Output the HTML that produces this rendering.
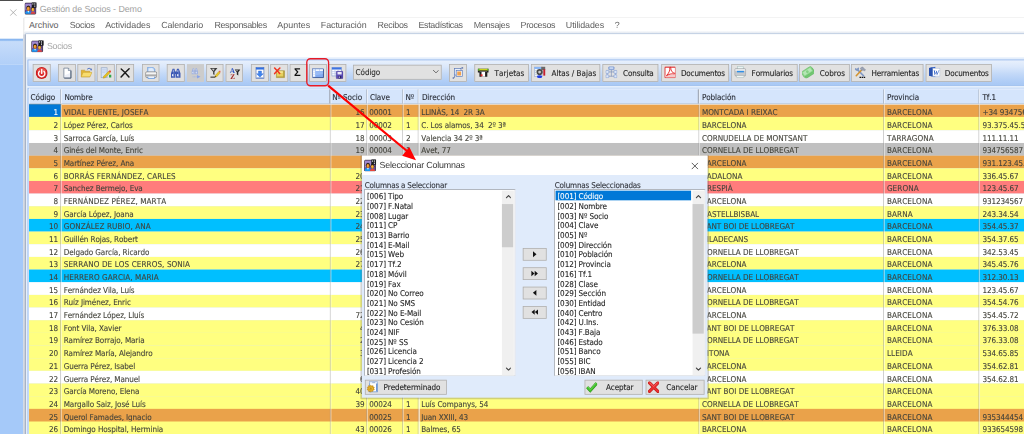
<!DOCTYPE html>
<html lang="es"><head><meta charset="utf-8"><title>Gestión de Socios - Demo</title>
<style>
html,body{margin:0;padding:0;background:#fff;overflow:hidden}
body{width:1024px;height:434px;position:relative}
#w{position:absolute;left:0;top:0;width:1375px;height:583px;transform:scale(0.7447);transform-origin:0 0;background:#fff}
#w div,#w span,#w svg{position:absolute;box-sizing:border-box}
#w span{line-height:1;white-space:pre;text-rendering:geometricPrecision}
#w text{text-rendering:geometricPrecision}
.t{font-family:"DejaVu Sans Condensed","DejaVu Sans","Liberation Sans",sans-serif;font-stretch:condensed;letter-spacing:-0.012em;font-kerning:none;font-variant-ligatures:none;-webkit-text-stroke:.12px}
.s{font-family:"Liberation Sans","DejaVu Sans",sans-serif;letter-spacing:-0.015em}
.sb{font-family:"Liberation Sans","DejaVu Sans",sans-serif;font-weight:bold}
.btn{background:#e1e1e1;border:1.3px solid #adadad}
</style></head><body><div id="w">
<div style="left:0px;top:0px;width:31.02px;height:52.03px;background:#fff"></div>
<div style="left:0px;top:52.03px;width:31.02px;height:4.36px;background:linear-gradient(#7fb0ee,#a9cbf6)"></div>
<div style="left:0px;top:56.4px;width:31.02px;height:30.88px;background:linear-gradient(#c6dcfa,#b1cff8)"></div>
<div style="left:0px;top:87.28px;width:31.02px;height:496.17px;background:#a5c9f9"></div>
<div style="left:0px;top:0px;width:30.88px;height:1.07px;background:#111"></div>
<svg style="left:13.43px;top:12.09px" width="9.67" height="9.67" viewBox="0 0 16 16"><path d="M1 1L15 15M15 1L1 15" stroke="#9a9a9a" stroke-width="1.6" fill="none"/></svg>
<div style="left:31.02px;top:23.5px;width:3.36px;height:22.16px;background:linear-gradient(90deg,#e6e6e6,#fff)"></div>
<div style="left:31.02px;top:45.66px;width:3.22px;height:537.8px;background:linear-gradient(90deg,#d6dbe4,#c3cad6)"></div>
<div style="left:33.97px;top:45.66px;width:1.21px;height:537.8px;background:#8898b2"></div>
<svg style="left:32.63px;top:2.89px" width="16.65" height="16.65" viewBox="0 0 16 16"><rect x=".4" y="1.1" width="14.2" height="14.2" rx="1.3" fill="#6d4fa6" stroke="#2a2233" stroke-width="1"/><path d="M1 1.8h9v6L1 10.5z" fill="#a48fd4" opacity=".9"/><ellipse cx="4.9" cy="7.6" rx="2.7" ry="3.3" fill="#2e2018"/><ellipse cx="4.9" cy="8.6" rx="1.9" ry="2.7" fill="#e58a22"/><ellipse cx="4.5" cy="8" rx=".9" ry="1.4" fill="#f6b048" opacity=".8"/><path d="M.9 15V13Q1.8 11 4.9 11.2Q8 11 8.3 13.2V15z" fill="#1b96f0"/><path d="M3.8 11.3L4.9 13.6L6 11.3z" fill="#e6f3ff"/><ellipse cx="10.7" cy="8.8" rx="2.4" ry="3" fill="#3a2818"/><ellipse cx="10.7" cy="9.6" rx="1.8" ry="2.4" fill="#eaa02c"/><ellipse cx="10.3" cy="9" rx=".8" ry="1.2" fill="#f8c458" opacity=".8"/><path d="M7.6 15V14.2Q8.6 12.4 10.7 12.5Q13.4 12.4 14 14.4V15z" fill="#e8463a"/><rect x="9.2" y="0" width="6.8" height="7" rx=".7" fill="#1b1b20"/><path d="M10.7 1.4v1.7M13.2 1.4v1.7M13.2 4.2v1.7" stroke="#f2f2f2" stroke-width="1.2"/></svg>
<span class="s" style="top:7.07px;font-size:11.95px;color:#a2a2a2;left:53.38px;letter-spacing:-0.0079em;">Gestión de Socios - Demo</span>
<div style="left:31.56px;top:23.1px;width:1344.17px;height:1.07px;background:#efefef"></div>
<span class="s" style="top:28.07px;font-size:11.95px;color:#5e5e5e;left:38.81px;letter-spacing:0.0004em;">Archivo</span>
<span class="s" style="top:28.07px;font-size:11.95px;color:#5e5e5e;left:93.59px;letter-spacing:-0.0321em;">Socios</span>
<span class="s" style="top:28.07px;font-size:11.95px;color:#5e5e5e;left:141.26px;letter-spacing:-0.0022em;">Actividades</span>
<span class="s" style="top:28.07px;font-size:11.95px;color:#5e5e5e;left:216.53px;letter-spacing:-0.0134em;">Calendario</span>
<span class="s" style="top:28.07px;font-size:11.95px;color:#5e5e5e;left:287.9px;letter-spacing:-0.0366em;">Responsables</span>
<span class="s" style="top:28.07px;font-size:11.95px;color:#5e5e5e;left:372.36px;letter-spacing:0.0039em;">Apuntes</span>
<span class="s" style="top:28.07px;font-size:11.95px;color:#5e5e5e;left:430.78px;letter-spacing:-0.0072em;">Facturación</span>
<span class="s" style="top:28.07px;font-size:11.95px;color:#5e5e5e;left:506.92px;letter-spacing:-0.0298em;">Recibos</span>
<span class="s" style="top:28.07px;font-size:11.95px;color:#5e5e5e;left:561.84px;letter-spacing:-0.0335em;">Estadísticas</span>
<span class="s" style="top:28.07px;font-size:11.95px;color:#5e5e5e;left:636.16px;letter-spacing:-0.0301em;">Mensajes</span>
<span class="s" style="top:28.07px;font-size:11.95px;color:#5e5e5e;left:699.07px;letter-spacing:-0.0351em;">Procesos</span>
<span class="s" style="top:28.07px;font-size:11.95px;color:#5e5e5e;left:759.77px;letter-spacing:-0.0088em;">Utilidades</span>
<span class="s" style="top:28.07px;font-size:11.95px;color:#5e5e5e;left:825.43px;">?</span>
<div style="left:31.56px;top:40.96px;width:1344.17px;height:3.89px;background:linear-gradient(#fff,#dfe5ee)"></div>
<div style="left:34.38px;top:44.58px;width:1341.35px;height:1.88px;background:#9db4d4"></div>
<div style="left:34.64px;top:46.46px;width:1341.08px;height:31.29px;background:#fff"></div>
<svg style="left:41.9px;top:53.58px" width="16.65" height="16.65" viewBox="0 0 16 16"><rect x=".4" y="1.1" width="14.2" height="14.2" rx="1.3" fill="#6d4fa6" stroke="#2a2233" stroke-width="1"/><path d="M1 1.8h9v6L1 10.5z" fill="#a48fd4" opacity=".9"/><ellipse cx="4.9" cy="7.6" rx="2.7" ry="3.3" fill="#2e2018"/><ellipse cx="4.9" cy="8.6" rx="1.9" ry="2.7" fill="#e58a22"/><ellipse cx="4.5" cy="8" rx=".9" ry="1.4" fill="#f6b048" opacity=".8"/><path d="M.9 15V13Q1.8 11 4.9 11.2Q8 11 8.3 13.2V15z" fill="#1b96f0"/><path d="M3.8 11.3L4.9 13.6L6 11.3z" fill="#e6f3ff"/><ellipse cx="10.7" cy="8.8" rx="2.4" ry="3" fill="#3a2818"/><ellipse cx="10.7" cy="9.6" rx="1.8" ry="2.4" fill="#eaa02c"/><ellipse cx="10.3" cy="9" rx=".8" ry="1.2" fill="#f8c458" opacity=".8"/><path d="M7.6 15V14.2Q8.6 12.4 10.7 12.5Q13.4 12.4 14 14.4V15z" fill="#e8463a"/><rect x="9.2" y="0" width="6.8" height="7" rx=".7" fill="#1b1b20"/><path d="M10.7 1.4v1.7M13.2 1.4v1.7M13.2 4.2v1.7" stroke="#f2f2f2" stroke-width="1.2"/></svg>
<span class="s" style="top:57.07px;font-size:11.95px;color:#a8a8a8;left:62.98px;letter-spacing:-0.0321em;">Socios</span>
<div style="left:34.64px;top:77.21px;width:1341.08px;height:506.24px;background:#e4eefc"></div>
<div style="left:37.26px;top:80.23px;width:1340.47px;height:34.51px;background:linear-gradient(#e8f0fc,#dbe8fb 25%,#c3d9f8 55%,#b0cdf6 85%,#a8c8f5);border:1.2px solid #83ace8;box-shadow:inset 0 1px 0 0 rgba(255,255,255,.45)"></div>
<div style="left:37.26px;top:117.5px;width:1340.47px;height:467.97px;background:#d5e5fc;border:1.25px solid #9bbdee"></div>
<div class="btn" style="left:44.31px;top:86.07px;width:23.77px;height:23.77px;"></div>
<svg style="left:48.21px;top:89.57px" width="15.98" height="15.98" viewBox="0 0 16 16"><circle cx="8" cy="8" r="8" fill="#c41818"/><circle cx="8" cy="8" r="6.9" fill="#dc2a2a"/><ellipse cx="8" cy="5" rx="5.6" ry="3.6" fill="#f2685c" opacity=".55"/><path d="M5 5.6A4.3 4.3 0 1 0 11 5.6" fill="none" stroke="#fff" stroke-width="1.9" stroke-linecap="round" opacity=".95"/><path d="M8 3.4V8.6" stroke="#fff" stroke-width="1.9" stroke-linecap="round" opacity=".95"/></svg>
<div class="btn" style="left:78.29px;top:86.07px;width:23.77px;height:23.77px;"></div>
<svg style="left:82.18px;top:89.57px" width="15.98" height="15.98" viewBox="0 0 16 16"><path d="M3.8 1.5H9.8L13 4.7V14.6H3.8z" fill="#fff" stroke="#5d6d86" stroke-width=".9"/><path d="M9.8 1.5V4.7H13" fill="#dfe6f2" stroke="#5d6d86" stroke-width=".8"/><path d="M13.4 5V15H4.4" fill="none" stroke="#44546e" stroke-width="1.1"/><path d="M5 11L12 8V13.8H5z" fill="#dfe4f2" opacity=".6"/></svg>
<div class="btn" style="left:104.34px;top:86.07px;width:23.77px;height:23.77px;"></div>
<svg style="left:108.23px;top:89.57px" width="15.98" height="15.98" viewBox="0 0 16 16"><path d="M1 4.2H5.6L7 5.6H12.6V13.2H1z" fill="#e2b434" stroke="#b98d1c" stroke-width=".6"/><path d="M1 13.2L3.6 7.2H15.6L12.8 13.2z" fill="#f8dc6e" stroke="#c39a22" stroke-width=".6"/><path d="M9 3Q11.6 .2 14.2 2.8" fill="none" stroke="#3f67c0" stroke-width="1.1"/><path d="M12.8 3.9L15.4 1.6L15.2 4.6z" fill="#3f67c0"/></svg>
<div class="btn" style="left:130.32px;top:86.07px;width:23.77px;height:23.77px;"></div>
<svg style="left:134.22px;top:89.57px" width="15.98" height="15.98" viewBox="0 0 16 16"><rect x="1.8" y="1" width="8" height="13.4" fill="#d5e2f5" stroke="#8ba0c2" stroke-width=".8"/><path d="M3.2 3.5h5M3.2 5.5h5M3.2 7.5h4" stroke="#b5c6e2" stroke-width=".7"/><path d="M5.2 12.4L11.8 5.8L13.8 7.8L7.2 14.4L4.6 15z" fill="#e6c11e" stroke="#a8861a" stroke-width=".5"/><path d="M11.8 5.8L13 4.6Q14 4 14.8 5Q15.6 5.8 15 6.6L13.8 7.8z" fill="#e2503e"/><path d="M12.4 10.5H15.6V14H12.4z" fill="#2fa447"/></svg>
<div class="btn" style="left:156.44px;top:86.07px;width:23.77px;height:23.77px;"></div>
<svg style="left:160.33px;top:89.57px" width="15.98" height="15.98" viewBox="0 0 16 16"><path d="M2.8 2.6Q8 7 13.2 13.4M13.4 2.4Q8 7.5 2.6 13.4" fill="none" stroke="#1a1a1a" stroke-width="2" stroke-linecap="round"/></svg>
<div class="btn" style="left:190.68px;top:86.07px;width:23.77px;height:23.77px;"></div>
<svg style="left:194.57px;top:89.57px" width="15.98" height="15.98" viewBox="0 0 16 16"><path d="M3.4 .2H10.2L12.8 2.8V7.6H3.4z" fill="#c6dcf8" stroke="#5a92dc" stroke-width="1"/><path d="M4.6 2.2L9 1.4L11.6 4.6V6H4.6z" fill="#e6f0fc" opacity=".8"/><rect x=".5" y="6.5" width="15" height="7.6" rx="1.7" fill="#d4d4d4" stroke="#7a7a7a" stroke-width=".9"/><rect x="1.3" y="7.3" width="13.4" height="2.2" rx=".9" fill="#f4f4f4"/><rect x="1" y="10.4" width="14" height="1.5" fill="#a4a4a4"/><path d="M3.6 13V15.4H12.6V13" fill="#eaf2fd" stroke="#5a92dc" stroke-width="1"/></svg>
<div class="btn" style="left:224.45px;top:86.07px;width:23.77px;height:23.77px;"></div>
<svg style="left:228.35px;top:89.57px" width="15.98" height="15.98" viewBox="0 0 16 16"><path d="M1.6 14.4V8.4L3.8 2.4H6.4L7.6 8.4V14.4zM8.4 14.4V8.4L9.6 2.4H12.2L14.4 8.4V14.4z" fill="#3a58b4"/><rect x="6.8" y="6" width="2.4" height="3.4" fill="#3a58b4"/><rect x="3" y="9.6" width="1.8" height="2.8" fill="#e6eeff"/><rect x="9.8" y="9.6" width="1.8" height="2.8" fill="#e6eeff"/><rect x="4" y="4.4" width="1.2" height="2" fill="#e6eeff" opacity=".7"/><rect x="10" y="4.4" width="1.2" height="2" fill="#e6eeff" opacity=".7"/><path d="M5.4 3V14M12 3.4V14" stroke="#fff" stroke-width="1.1" opacity=".28"/></svg>
<div style="left:250.7px;top:86.07px;width:23.5px;height:23.77px;background:#cccccc"></div>
<svg style="left:254.46px;top:89.57px" width="15.98" height="15.98" viewBox="0 0 16 16"><g transform="translate(2.4 .2) scale(.66)"><path d="M1.6 14.4V8.4L3.8 2.4H6.4L7.6 8.4V14.4zM8.4 14.4V8.4L9.6 2.4H12.2L14.4 8.4V14.4z" fill="#9db0de"/><rect x="6.8" y="6" width="2.4" height="3.4" fill="#9db0de"/><rect x="3" y="9.6" width="1.8" height="2.8" fill="#e8eefc"/><rect x="9.8" y="9.6" width="1.8" height="2.8" fill="#e8eefc"/><rect x="4" y="4.4" width="1.2" height="2" fill="#e8eefc" opacity=".7"/><rect x="10" y="4.4" width="1.2" height="2" fill="#e8eefc" opacity=".7"/><path d="M5.4 3V14M12 3.4V14" stroke="#fff" stroke-width="1.1" opacity=".28"/></g><path d="M4.6 13.2H11" stroke="#9ab0e6" stroke-width="1.1" stroke-dasharray="1.4 .7"/><path d="M10.6 10.8L15.2 13.2L10.6 15.6z" fill="#86a2ea"/></svg>
<div class="btn" style="left:276.62px;top:86.07px;width:23.77px;height:23.77px;"></div>
<svg style="left:280.52px;top:89.57px" width="15.98" height="15.98" viewBox="0 0 16 16"><path d="M1 1.4H11L7 6.4V10.8L5.2 9.8V6.4z" fill="#3c3c3c"/><path d="M3.2 2.2H7.2L6 5.2z" fill="#e4e4e4" opacity=".85"/><path d="M1.6 13.6H8" stroke="#1c1c1c" stroke-width="1.3"/><path d="M7.4 13.8L8.2 11.2L12.8 6L14.8 7.8L10.2 13z" fill="#e8c62a" stroke="#a88a1c" stroke-width=".5"/><path d="M12.8 6L13.8 4.9Q14.8 4.4 15.5 5.2Q16.2 6 15.7 6.8L14.8 7.8z" fill="#e65a48"/><path d="M7.4 13.8L8 12L9.2 13.2z" fill="#222"/></svg>
<div class="btn" style="left:302.67px;top:86.07px;width:23.77px;height:23.77px;"></div>
<svg style="left:306.57px;top:89.57px" width="15.98" height="15.98" viewBox="0 0 16 16"><text x="1.6" y="8" font-family="Liberation Serif,serif" font-weight="bold" font-size="9.8" fill="#2d55c4">A</text><text x="2.2" y="15.6" font-family="Liberation Serif,serif" font-weight="bold" font-size="9.8" fill="#a12d2d">Z</text><path d="M8.2 3.4H15.8L13 7.2V11.4L11 10.2V7.2z" fill="#262626"/><path d="M9.8 4H12.4L11.6 6z" fill="#ddd" opacity=".8"/></svg>
<div class="btn" style="left:336.91px;top:86.07px;width:23.77px;height:23.77px;"></div>
<svg style="left:340.81px;top:89.57px" width="15.98" height="15.98" viewBox="0 0 16 16"><rect x="2.8" y=".8" width="10.6" height="14.6" fill="#fff" stroke="#5472b4" stroke-width=".9"/><rect x="2.8" y=".8" width="10.6" height="2.6" fill="#2f6fe2"/><path d="M6 5.4H10.2V9H12.6L8.1 13.8L3.6 9H6z" fill="#3f84ee" stroke="#2c63c8" stroke-width=".5"/><rect x="3.2" y="14" width="9.8" height="1.2" fill="#6f8fd0"/></svg>
<div class="btn" style="left:362.96px;top:86.07px;width:23.77px;height:23.77px;"></div>
<svg style="left:366.86px;top:89.57px" width="15.98" height="15.98" viewBox="0 0 16 16"><path d="M4.2 5H15V14.2H4.2z" fill="#e7d05c" stroke="#9c8630" stroke-width=".8"/><path d="M4.6 12.6H14.6V13.8H4.6zM13.4 5.4H14.6V13.8H13.4z" fill="#b09a3c"/><path d="M5 5.6H12.8V8H5z" fill="#f4e48e"/><path d="M1.8 1.4L8.6 8.6M8.8 1.4L1.8 8.8" stroke="#f03420" stroke-width="2.1" stroke-linecap="round"/></svg>
<div class="btn" style="left:388.95px;top:86.07px;width:23.77px;height:23.77px;"></div>
<span class="sb" style="top:90.03px;font-size:15.04px;color:#111;left:394.86px;">Σ</span>
<div class="btn" style="left:414.93px;top:86.07px;width:23.77px;height:23.77px;"></div>
<svg style="left:418.83px;top:89.57px" width="15.98" height="15.98" viewBox="0 0 16 16"><rect x=".8" y="2.4" width="14.6" height="11.8" fill="#9abcf4" stroke="#4a6ab0" stroke-width=".8"/><path d="M4.6 6H15V13.8H4.6z" fill="#82aaf0"/><path d="M4.6 6H15V9.5L4.6 11z" fill="#9dbef6" opacity=".8"/><rect x="1.2" y="2.8" width="3" height="11" fill="#d5e3fa"/><rect x="5" y="3.2" width="4.4" height="2" fill="#fff"/><rect x="10" y="3.2" width="4.8" height="2" fill="#fff"/><path d="M1.4 6.4h2.6M1.4 9h2.6M1.4 11.6h2.6" stroke="#fff" stroke-width="1.3"/><path d="M15.4 3V14.2H1.4" fill="none" stroke="#2d4684" stroke-width=".9"/></svg>
<div class="btn" style="left:440.85px;top:86.07px;width:23.77px;height:23.77px;"></div>
<svg style="left:444.74px;top:89.57px" width="15.98" height="15.98" viewBox="0 0 16 16"><rect x=".6" y=".6" width="12.8" height="11.4" fill="#fff" stroke="#6f8dcb" stroke-width=".8"/><rect x=".6" y=".6" width="12.8" height="2.8" fill="#3d73e2"/><path d="M.6 6.2h12.8M.6 9h12.8M4.8 3.4v8.6M9 3.4v8.6" stroke="#a9bde6" stroke-width=".8"/><rect x="6.6" y="5.8" width="9" height="9.8" rx=".8" fill="#5b4cb6" stroke="#3d3290" stroke-width=".6"/><rect x="8.2" y="6.6" width="5.6" height="3.4" fill="#eceaf8"/><rect x="9.4" y="12" width="4" height="3.4" fill="#2c2660"/><rect x="10" y="12.6" width="1.2" height="2.2" fill="#cfcbee"/></svg>
<div class="btn" style="left:602.93px;top:86.07px;width:23.77px;height:23.77px;"></div>
<svg style="left:606.82px;top:89.57px" width="15.98" height="15.98" viewBox="0 0 16 16"><rect x="3.4" y="2.2" width="8.6" height="8.6" fill="#e9effa" stroke="#5a78b8" stroke-width=".9"/><rect x="5.6" y="4.6" width="8.2" height="8.2" fill="#f2f5fc" stroke="#5a78b8" stroke-width=".9"/><rect x="7" y="6" width="5.2" height="5.4" fill="#f2a24e"/><path d="M3.4 11.4V13.6Q3.4 14.8 2 14.8M12 2.2Q12 .8 13.6 1" fill="none" stroke="#4a66a8" stroke-width=".9"/><circle cx="1.6" cy="14.8" r=".9" fill="#3c58a0"/><circle cx="14.2" cy="1.2" r=".9" fill="#3c58a0"/></svg>
<div class="btn" style="left:473.88px;top:86.61px;width:119.11px;height:20.55px;"></div>
<span class="t" style="top:93.15px;font-size:10.81px;color:#2a2a2a;left:477.51px;">Código</span>
<svg style="left:580.5px;top:93.46px" width="8.86" height="5.91" viewBox="0 0 16 9"><path d="M1 1L8 8L15 1" stroke="#555" stroke-width="2" fill="none"/></svg>
<div class="btn" style="left:636.63px;top:86.07px;width:73.72px;height:23.77px;"></div>
<svg style="left:640.53px;top:89.3px" width="15.98" height="15.98" viewBox="0 0 16 16"><path d="M.6 3.2H15.6V8.4H13.4V14H2.8V8.4H.6z" fill="#1f1f1f"/><rect x="1" y="3.4" width="14.2" height="2.2" fill="#c9d31f"/><rect x="1" y="3.4" width="1.8" height="2.2" fill="#3fae3f"/><rect x="13.4" y="3.4" width="1.8" height="2.2" fill="#3fae3f"/><rect x="5.6" y="7.2" width="4.8" height="6.8" fill="#fff"/><rect x="4.4" y="10.8" width="2.6" height="2.6" fill="#e02a2a"/><rect x="3" y="6.4" width="10" height=".9" fill="#777"/></svg>
<span class="t" style="top:94.15px;font-size:10.81px;color:#1c1c1c;left:664.16px;letter-spacing:0.0069em;">Tarjetas</span>
<div class="btn" style="left:713.37px;top:86.07px;width:93.12px;height:23.77px;"></div>
<svg style="left:717.27px;top:89.3px" width="15.98" height="15.98" viewBox="0 0 16 16"><rect x=".6" y="1" width="10.4" height="12.4" fill="#f2f6fd" stroke="#8c9cc0" stroke-width=".7"/><rect x=".6" y="1" width="10.4" height="2.6" fill="#86b4f6"/><rect x="9.8" y=".6" width="5.4" height="4.4" fill="#6a6a6a"/><rect x="12.6" y="4" width="2.6" height="8.6" fill="#c5202e"/><circle cx="7.6" cy="7.8" r="4.2" fill="#4a4a4a"/><circle cx="7.6" cy="7.8" r="1.9" fill="#c9c9c9"/><path d="M1.6 6h2.4M1.6 8.4h2.4M1.6 10.8h2.4" stroke="#9aa" stroke-width=".8"/><ellipse cx="7.6" cy="14" rx="3.6" ry="2" fill="#2440e2"/></svg>
<span class="t" style="top:94.15px;font-size:10.81px;color:#1c1c1c;left:740.57px;letter-spacing:0.0006em;">Altas / Bajas</span>
<div class="btn" style="left:809.39px;top:86.07px;width:74.73px;height:23.77px;"></div>
<svg style="left:813.28px;top:89.3px" width="15.98" height="15.98" viewBox="0 0 16 16"><path d="M8 4.4V13.6M4.4 7.6H11.6M4.4 13.4H11.6M2.4 7.6V13.4M13.6 7.6V13.4" stroke="#7c90b8" stroke-width=".9" fill="none"/><rect x="4.4" y=".6" width="7.2" height="4" rx=".8" fill="#a6bde8" stroke="#6888c8" stroke-width=".8"/><rect x="5.8" y="1.8" width="4.4" height="1.2" fill="#e3ecfb"/><rect x="0.5" y="5.6" width="4" height="4" rx=".8" fill="#dce7f9" stroke="#7c98d2" stroke-width=".8"/><rect x="11.5" y="5.6" width="4" height="4" rx=".8" fill="#dce7f9" stroke="#7c98d2" stroke-width=".8"/><rect x="0.5" y="11.5" width="4" height="4" rx=".8" fill="#dce7f9" stroke="#7c98d2" stroke-width=".8"/><rect x="11.5" y="11.5" width="4" height="4" rx=".8" fill="#dce7f9" stroke="#7c98d2" stroke-width=".8"/></svg>
<span class="t" style="top:94.15px;font-size:10.81px;color:#1c1c1c;left:836.71px;letter-spacing:-0.0176em;">Consulta</span>
<div class="btn" style="left:887.61px;top:86.07px;width:91.85px;height:23.77px;"></div>
<svg style="left:891.5px;top:89.3px" width="15.98" height="15.98" viewBox="0 0 16 16"><rect x=".9" y="1.2" width="14.2" height="14.2" rx="1" fill="#fff" stroke="#df3636" stroke-width="1.5"/><path d="M1.6 11.4H14.4V14.6H1.6z" fill="#f6caca"/><path d="M3 12.6C6 9.4 8 5.4 7.4 2.4C7.2 .8 9 .8 8.8 2.6C8.6 6 11 8.8 14 9.4C15 9.8 14.4 10.6 13.4 10.4C9.6 9.6 5.8 10.8 3 12.6z" fill="none" stroke="#e11d1d" stroke-width="1.2"/></svg>
<span class="t" style="top:94.15px;font-size:10.81px;color:#1c1c1c;left:914.33px;letter-spacing:-0.0202em;">Documentos</span>
<div class="btn" style="left:982.27px;top:86.07px;width:88.63px;height:23.77px;"></div>
<svg style="left:986.17px;top:89.3px" width="15.98" height="15.98" viewBox="0 0 16 16"><rect x="4.4" y=".6" width="7.6" height="3.6" fill="#eaf4f4" stroke="#9fbcbc" stroke-width=".7"/><rect x=".6" y="3.2" width="14.8" height="9.8" rx="1.6" fill="#c6c9cd" stroke="#8e9296" stroke-width=".7"/><rect x="1.2" y="3.8" width="13.6" height="2.4" rx="1" fill="#e6e8ea"/><rect x="3.6" y="6.2" width="9.4" height="2" fill="#2f8fe6"/><rect x="3" y="12.4" width="10" height="2.8" rx=".8" fill="#f0f5f5" stroke="#a4b4b4" stroke-width=".7"/></svg>
<span class="t" style="top:94.15px;font-size:10.81px;color:#1c1c1c;left:1009.27px;letter-spacing:-0.0165em;">Formularios</span>
<div class="btn" style="left:1073.45px;top:86.07px;width:67.41px;height:23.77px;"></div>
<svg style="left:1077.35px;top:89.3px" width="15.98" height="15.98" viewBox="0 0 16 16"><g transform="rotate(-33 8 8)"><rect x="1" y="6.2" width="15" height="7.6" fill="#74c874" stroke="#58b058" stroke-width=".6"/><rect x="0" y="3" width="15.4" height="8" fill="#8ad68a" stroke="#62b862" stroke-width=".7"/><rect x="1.8" y="4.6" width="11.8" height="4.8" fill="#b4e6b4"/><ellipse cx="7.7" cy="7" rx="1.8" ry="2" fill="#84d084"/></g></svg>
<span class="t" style="top:94.15px;font-size:10.81px;color:#1c1c1c;left:1100.78px;letter-spacing:-0.0004em;">Cobros</span>
<div class="btn" style="left:1143.41px;top:86.07px;width:97.02px;height:23.77px;"></div>
<svg style="left:1147.31px;top:89.3px" width="15.98" height="15.98" viewBox="0 0 16 16"><path d="M4.4 4.6L12.6 12.8" stroke="#7f97c2" stroke-width="2.2" stroke-linecap="round"/><path d="M1.2 2.2A2.8 2.8 0 1 0 5.6 1.2L3.8 3.2z" fill="#7f97c2"/><path d="M2.8 12.8L10 5" stroke="#d39330" stroke-width="2.1" stroke-linecap="round"/><path d="M8.2 2.6L11.2 .8L15.4 5L13.4 6.2L11.8 4.8L10.2 6z" fill="#9aa3b5" stroke="#6e7890" stroke-width=".5"/><path d="M7.2 15H9.2M10 15H12M12.8 15H14.8" stroke="#111" stroke-width="1.7"/></svg>
<span class="t" style="top:94.15px;font-size:10.81px;color:#1c1c1c;left:1170.27px;letter-spacing:-0.0193em;">Herramientas</span>
<div class="btn" style="left:1243.45px;top:86.07px;width:88.09px;height:23.77px;"></div>
<svg style="left:1247.35px;top:89.3px" width="15.98" height="15.98" viewBox="0 0 16 16"><path d="M.6 2.2L9 .6V14.4L.6 12.8z" fill="#2f5fc6"/><rect x="5.2" y="2.6" width="10" height="10.6" fill="#fff" stroke="#a4b4d2" stroke-width=".7"/><path d="M.6 2.2L5.2 1.4V13.6L.6 12.8z" fill="#2a52b0"/><text x="6" y="11.2" font-family="Liberation Serif,serif" font-style="italic" font-weight="bold" font-size="9.4" fill="#2f5fc6">W</text><path d="M6 14.2L15 13.4V14.6L6 15.6z" fill="#cfd8ea"/></svg>
<span class="t" style="top:94.15px;font-size:10.81px;color:#1c1c1c;left:1268.63px;letter-spacing:-0.0214em;">Documentos</span>
<div style="left:38.87px;top:119.11px;width:1336.85px;height:21.35px;background:#d5e5fc;border-top:.9px solid #eef4fe;border-bottom:1.5px solid #b2bbc9"></div>
<span class="t" style="top:126.15px;font-size:10.81px;color:#262a33;left:41.09px;">Código</span>
<span class="t" style="top:126.15px;font-size:10.81px;color:#262a33;left:86.48px;">Nombre</span>
<span class="t" style="top:126.15px;font-size:10.81px;color:#262a33;left:446.22px;">Nº Socio</span>
<span class="t" style="top:126.15px;font-size:10.81px;color:#262a33;left:496.84px;">Clave</span>
<span class="t" style="top:126.15px;font-size:10.81px;color:#262a33;left:544.38px;">Nº</span>
<span class="t" style="top:126.15px;font-size:10.81px;color:#262a33;left:566.54px;">Dirección</span>
<span class="t" style="top:126.15px;font-size:10.81px;color:#262a33;left:942.53px;">Población</span>
<span class="t" style="top:126.15px;font-size:10.81px;color:#262a33;left:1190.95px;">Provincia</span>
<span class="t" style="top:126.15px;font-size:10.81px;color:#262a33;left:1319.32px;">Tf.1</span>
<div style="left:38.87px;top:140.46px;width:1336.85px;height:17.43px;background:#eaa24a"></div>
<div style="left:39.14px;top:140.46px;width:42.57px;height:17.03px;background:#0078d7"></div>
<span class="t" style="top:146.15px;font-size:10.81px;color:#fff;right:1296.98px;">1</span>
<span class="t" style="top:146.15px;font-size:10.81px;color:#42423a;left:85.54px;letter-spacing:0.0110em;">VIDAL FUENTE, JOSEFA</span>
<span class="t" style="top:146.15px;font-size:10.81px;color:#42423a;right:885.68px;">16</span>
<span class="t" style="top:146.15px;font-size:10.81px;color:#42423a;left:495.9px;">00001</span>
<span class="t" style="top:146.15px;font-size:10.81px;color:#42423a;left:545.19px;">1</span>
<span class="t" style="top:146.15px;font-size:10.81px;color:#42423a;left:565.6px;">LLINÀS, 14  2R 3A</span>
<span class="t" style="top:146.15px;font-size:10.81px;color:#42423a;left:942.53px;letter-spacing:0.0000em;">MONTCADA I REIXAC</span>
<span class="t" style="top:146.15px;font-size:10.81px;color:#42423a;left:1190.95px;letter-spacing:0.0130em;">BARCELONA</span>
<span class="t" style="top:146.15px;font-size:10.81px;color:#42423a;left:1319.32px;">+34 934756587</span>
<div style="left:38.87px;top:157.49px;width:1336.85px;height:17.43px;background:#ffff80"></div>
<span class="t" style="top:164.15px;font-size:10.81px;color:#42423a;right:1296.98px;">2</span>
<span class="t" style="top:164.15px;font-size:10.81px;color:#42423a;left:85.54px;">López Pérez, Carlos</span>
<span class="t" style="top:164.15px;font-size:10.81px;color:#42423a;right:885.68px;">17</span>
<span class="t" style="top:164.15px;font-size:10.81px;color:#42423a;left:495.9px;">00002</span>
<span class="t" style="top:164.15px;font-size:10.81px;color:#42423a;left:545.19px;">1</span>
<span class="t" style="top:164.15px;font-size:10.81px;color:#42423a;left:565.6px;">C. Los alamos, 34  2º 3ª</span>
<span class="t" style="top:164.15px;font-size:10.81px;color:#42423a;left:942.53px;letter-spacing:0.0000em;">BARCELONA</span>
<span class="t" style="top:164.15px;font-size:10.81px;color:#42423a;left:1190.95px;letter-spacing:0.0130em;">BARCELONA</span>
<span class="t" style="top:164.15px;font-size:10.81px;color:#42423a;left:1319.32px;">93.375.45.56</span>
<div style="left:38.87px;top:174.51px;width:1336.85px;height:17.43px;background:#ffffff"></div>
<span class="t" style="top:181.15px;font-size:10.81px;color:#42423a;right:1296.98px;">3</span>
<span class="t" style="top:181.15px;font-size:10.81px;color:#42423a;left:85.54px;">Sarroca García, Luís</span>
<span class="t" style="top:181.15px;font-size:10.81px;color:#42423a;right:885.68px;">18</span>
<span class="t" style="top:181.15px;font-size:10.81px;color:#42423a;left:495.9px;">00003</span>
<span class="t" style="top:181.15px;font-size:10.81px;color:#42423a;left:545.19px;">2</span>
<span class="t" style="top:181.15px;font-size:10.81px;color:#42423a;left:565.6px;">Valencia 34 2º 3ª</span>
<span class="t" style="top:181.15px;font-size:10.81px;color:#42423a;left:942.53px;letter-spacing:0.0000em;">CORNUDELLA DE MONTSANT</span>
<span class="t" style="top:181.15px;font-size:10.81px;color:#42423a;left:1190.95px;letter-spacing:0.0130em;">TARRAGONA</span>
<span class="t" style="top:181.15px;font-size:10.81px;color:#42423a;left:1319.32px;">111.11.11</span>
<div style="left:38.87px;top:191.54px;width:1336.85px;height:17.43px;background:#c0c0c0"></div>
<span class="t" style="top:197.15px;font-size:10.81px;color:#42423a;right:1296.98px;">4</span>
<span class="t" style="top:197.15px;font-size:10.81px;color:#42423a;left:85.54px;">Ginés del Monte, Enric</span>
<span class="t" style="top:197.15px;font-size:10.81px;color:#42423a;right:885.68px;">19</span>
<span class="t" style="top:197.15px;font-size:10.81px;color:#42423a;left:495.9px;">00004</span>
<span class="t" style="top:197.15px;font-size:10.81px;color:#42423a;left:545.19px;">1</span>
<span class="t" style="top:197.15px;font-size:10.81px;color:#42423a;left:565.6px;">Avet, 77</span>
<span class="t" style="top:197.15px;font-size:10.81px;color:#42423a;left:942.53px;letter-spacing:0.0000em;">CORNELLA DE LLOBREGAT</span>
<span class="t" style="top:197.15px;font-size:10.81px;color:#42423a;left:1190.95px;letter-spacing:0.0130em;">BARCELONA</span>
<span class="t" style="top:197.15px;font-size:10.81px;color:#42423a;left:1319.32px;">934756587</span>
<div style="left:38.87px;top:208.57px;width:1336.85px;height:17.43px;background:#eaa24a"></div>
<span class="t" style="top:215.15px;font-size:10.81px;color:#42423a;right:1296.98px;">5</span>
<span class="t" style="top:215.15px;font-size:10.81px;color:#42423a;left:85.54px;">Martínez Pérez, Ana</span>
<span class="t" style="top:215.15px;font-size:10.81px;color:#42423a;left:495.9px;">00005</span>
<span class="t" style="top:215.15px;font-size:10.81px;color:#42423a;left:545.19px;">1</span>
<span class="t" style="top:215.15px;font-size:10.81px;color:#42423a;left:942.53px;letter-spacing:0.0000em;">BARCELONA</span>
<span class="t" style="top:215.15px;font-size:10.81px;color:#42423a;left:1190.95px;letter-spacing:0.0130em;">BARCELONA</span>
<span class="t" style="top:215.15px;font-size:10.81px;color:#42423a;left:1319.32px;">931.123.45.67</span>
<div style="left:38.87px;top:225.59px;width:1336.85px;height:17.43px;background:#ffff80"></div>
<span class="t" style="top:232.15px;font-size:10.81px;color:#42423a;right:1296.98px;">6</span>
<span class="t" style="top:232.15px;font-size:10.81px;color:#42423a;left:85.54px;letter-spacing:0.0110em;">BORRÁS FERNÁNDEZ, CARLES</span>
<span class="t" style="top:232.15px;font-size:10.81px;color:#42423a;right:885.68px;">20</span>
<span class="t" style="top:232.15px;font-size:10.81px;color:#42423a;left:495.9px;">00006</span>
<span class="t" style="top:232.15px;font-size:10.81px;color:#42423a;left:545.19px;">1</span>
<span class="t" style="top:232.15px;font-size:10.81px;color:#42423a;left:942.53px;letter-spacing:0.0000em;">BADALONA</span>
<span class="t" style="top:232.15px;font-size:10.81px;color:#42423a;left:1190.95px;letter-spacing:0.0130em;">BARCELONA</span>
<span class="t" style="top:232.15px;font-size:10.81px;color:#42423a;left:1319.32px;">336.45.67</span>
<div style="left:38.87px;top:242.62px;width:1336.85px;height:17.43px;background:#ff7c7c"></div>
<span class="t" style="top:248.15px;font-size:10.81px;color:#42423a;right:1296.98px;">7</span>
<span class="t" style="top:248.15px;font-size:10.81px;color:#42423a;left:85.54px;">Sanchez Bermejo, Eva</span>
<span class="t" style="top:248.15px;font-size:10.81px;color:#42423a;right:885.68px;">21</span>
<span class="t" style="top:248.15px;font-size:10.81px;color:#42423a;left:495.9px;">00007</span>
<span class="t" style="top:248.15px;font-size:10.81px;color:#42423a;left:545.19px;">1</span>
<span class="t" style="top:248.15px;font-size:10.81px;color:#42423a;left:942.53px;letter-spacing:0.0000em;">CRESPIÀ</span>
<span class="t" style="top:248.15px;font-size:10.81px;color:#42423a;left:1190.95px;letter-spacing:0.0130em;">GERONA</span>
<span class="t" style="top:248.15px;font-size:10.81px;color:#42423a;left:1319.32px;">123.45.67</span>
<div style="left:38.87px;top:259.65px;width:1336.85px;height:17.43px;background:#ffffff"></div>
<span class="t" style="top:266.15px;font-size:10.81px;color:#42423a;right:1296.98px;">8</span>
<span class="t" style="top:266.15px;font-size:10.81px;color:#42423a;left:85.54px;letter-spacing:0.0110em;">FERNÁNDEZ PÉREZ, MARTA</span>
<span class="t" style="top:266.15px;font-size:10.81px;color:#42423a;right:885.68px;">22</span>
<span class="t" style="top:266.15px;font-size:10.81px;color:#42423a;left:495.9px;">00008</span>
<span class="t" style="top:266.15px;font-size:10.81px;color:#42423a;left:545.19px;">1</span>
<span class="t" style="top:266.15px;font-size:10.81px;color:#42423a;left:942.53px;letter-spacing:0.0000em;">BARCELONA</span>
<span class="t" style="top:266.15px;font-size:10.81px;color:#42423a;left:1190.95px;letter-spacing:0.0130em;">BARCELONA</span>
<span class="t" style="top:266.15px;font-size:10.81px;color:#42423a;left:1319.32px;">931234567</span>
<div style="left:38.87px;top:276.68px;width:1336.85px;height:17.43px;background:#ffff80"></div>
<span class="t" style="top:283.15px;font-size:10.81px;color:#42423a;right:1296.98px;">9</span>
<span class="t" style="top:283.15px;font-size:10.81px;color:#42423a;left:85.54px;">García López, Joana</span>
<span class="t" style="top:283.15px;font-size:10.81px;color:#42423a;right:885.68px;">23</span>
<span class="t" style="top:283.15px;font-size:10.81px;color:#42423a;left:495.9px;">00009</span>
<span class="t" style="top:283.15px;font-size:10.81px;color:#42423a;left:545.19px;">1</span>
<span class="t" style="top:283.15px;font-size:10.81px;color:#42423a;left:942.53px;letter-spacing:0.0000em;">CASTELLBISBAL</span>
<span class="t" style="top:283.15px;font-size:10.81px;color:#42423a;left:1190.95px;letter-spacing:0.0130em;">BARNA</span>
<span class="t" style="top:283.15px;font-size:10.81px;color:#42423a;left:1319.32px;">243.34.54</span>
<div style="left:38.87px;top:293.7px;width:1336.85px;height:17.43px;background:#00bfff"></div>
<span class="t" style="top:299.15px;font-size:10.81px;color:#42423a;right:1296.98px;">10</span>
<span class="t" style="top:299.15px;font-size:10.81px;color:#42423a;left:85.54px;letter-spacing:0.0110em;">GONZÁLEZ RUBIO, ANA</span>
<span class="t" style="top:299.15px;font-size:10.81px;color:#42423a;right:885.68px;">24</span>
<span class="t" style="top:299.15px;font-size:10.81px;color:#42423a;left:495.9px;">00010</span>
<span class="t" style="top:299.15px;font-size:10.81px;color:#42423a;left:545.19px;">1</span>
<span class="t" style="top:299.15px;font-size:10.81px;color:#42423a;left:942.53px;letter-spacing:0.0000em;">SANT BOI DE LLOBREGAT</span>
<span class="t" style="top:299.15px;font-size:10.81px;color:#42423a;left:1190.95px;letter-spacing:0.0130em;">BARCELONA</span>
<span class="t" style="top:299.15px;font-size:10.81px;color:#42423a;left:1319.32px;">354.45.37</span>
<div style="left:38.87px;top:310.73px;width:1336.85px;height:17.43px;background:#ffff80"></div>
<span class="t" style="top:317.15px;font-size:10.81px;color:#42423a;right:1296.98px;">11</span>
<span class="t" style="top:317.15px;font-size:10.81px;color:#42423a;left:85.54px;">Guillén Rojas, Robert</span>
<span class="t" style="top:317.15px;font-size:10.81px;color:#42423a;right:885.68px;">25</span>
<span class="t" style="top:317.15px;font-size:10.81px;color:#42423a;left:495.9px;">00011</span>
<span class="t" style="top:317.15px;font-size:10.81px;color:#42423a;left:545.19px;">1</span>
<span class="t" style="top:317.15px;font-size:10.81px;color:#42423a;left:942.53px;letter-spacing:0.0000em;">VILADECANS</span>
<span class="t" style="top:317.15px;font-size:10.81px;color:#42423a;left:1190.95px;letter-spacing:0.0130em;">BARCELONA</span>
<span class="t" style="top:317.15px;font-size:10.81px;color:#42423a;left:1319.32px;">354.37.65</span>
<div style="left:38.87px;top:327.76px;width:1336.85px;height:17.43px;background:#ffffff"></div>
<span class="t" style="top:334.15px;font-size:10.81px;color:#42423a;right:1296.98px;">12</span>
<span class="t" style="top:334.15px;font-size:10.81px;color:#42423a;left:85.54px;">Delgado García, Ricardo</span>
<span class="t" style="top:334.15px;font-size:10.81px;color:#42423a;right:885.68px;">26</span>
<span class="t" style="top:334.15px;font-size:10.81px;color:#42423a;left:495.9px;">00012</span>
<span class="t" style="top:334.15px;font-size:10.81px;color:#42423a;left:545.19px;">1</span>
<span class="t" style="top:334.15px;font-size:10.81px;color:#42423a;left:942.53px;letter-spacing:0.0000em;">CORNELLA DE LLOBREGAT</span>
<span class="t" style="top:334.15px;font-size:10.81px;color:#42423a;left:1190.95px;letter-spacing:0.0130em;">BARCELONA</span>
<span class="t" style="top:334.15px;font-size:10.81px;color:#42423a;left:1319.32px;">342.53.45</span>
<div style="left:38.87px;top:344.78px;width:1336.85px;height:17.43px;background:#ffff80"></div>
<span class="t" style="top:350.15px;font-size:10.81px;color:#42423a;right:1296.98px;">13</span>
<span class="t" style="top:350.15px;font-size:10.81px;color:#42423a;left:85.54px;letter-spacing:0.0110em;">SERRANO DE LOS CERROS, SONIA</span>
<span class="t" style="top:350.15px;font-size:10.81px;color:#42423a;right:885.68px;">27</span>
<span class="t" style="top:350.15px;font-size:10.81px;color:#42423a;left:495.9px;">00013</span>
<span class="t" style="top:350.15px;font-size:10.81px;color:#42423a;left:545.19px;">1</span>
<span class="t" style="top:350.15px;font-size:10.81px;color:#42423a;left:942.53px;letter-spacing:0.0000em;">BARCELONA</span>
<span class="t" style="top:350.15px;font-size:10.81px;color:#42423a;left:1190.95px;letter-spacing:0.0130em;">BARCELONA</span>
<span class="t" style="top:350.15px;font-size:10.81px;color:#42423a;left:1319.32px;">345.45.76</span>
<div style="left:38.87px;top:361.81px;width:1336.85px;height:17.43px;background:#00bfff"></div>
<span class="t" style="top:368.15px;font-size:10.81px;color:#42423a;right:1296.98px;">14</span>
<span class="t" style="top:368.15px;font-size:10.81px;color:#42423a;left:85.54px;letter-spacing:0.0110em;">HERRERO GARCIA, MARIA</span>
<span class="t" style="top:368.15px;font-size:10.81px;color:#42423a;left:495.9px;">00014</span>
<span class="t" style="top:368.15px;font-size:10.81px;color:#42423a;left:545.19px;">1</span>
<span class="t" style="top:368.15px;font-size:10.81px;color:#42423a;left:942.53px;letter-spacing:0.0000em;">CORNELLA DE LLOBREGAT</span>
<span class="t" style="top:368.15px;font-size:10.81px;color:#42423a;left:1190.95px;letter-spacing:0.0130em;">BARCELONA</span>
<span class="t" style="top:368.15px;font-size:10.81px;color:#42423a;left:1319.32px;">312.30.13</span>
<div style="left:38.87px;top:378.84px;width:1336.85px;height:17.43px;background:#ffffff"></div>
<span class="t" style="top:385.15px;font-size:10.81px;color:#42423a;right:1296.98px;">15</span>
<span class="t" style="top:385.15px;font-size:10.81px;color:#42423a;left:85.54px;">Fernández Vila, Luís</span>
<span class="t" style="top:385.15px;font-size:10.81px;color:#42423a;left:495.9px;">00015</span>
<span class="t" style="top:385.15px;font-size:10.81px;color:#42423a;left:545.19px;">1</span>
<span class="t" style="top:385.15px;font-size:10.81px;color:#42423a;left:942.53px;letter-spacing:0.0000em;">BARCELONA</span>
<span class="t" style="top:385.15px;font-size:10.81px;color:#42423a;left:1190.95px;letter-spacing:0.0130em;">BARCELONA</span>
<span class="t" style="top:385.15px;font-size:10.81px;color:#42423a;left:1319.32px;">123.45.67</span>
<div style="left:38.87px;top:395.86px;width:1336.85px;height:17.43px;background:#ffff80"></div>
<span class="t" style="top:401.15px;font-size:10.81px;color:#42423a;right:1296.98px;">16</span>
<span class="t" style="top:401.15px;font-size:10.81px;color:#42423a;left:85.54px;">Ruíz Jiménez, Enric</span>
<span class="t" style="top:401.15px;font-size:10.81px;color:#42423a;left:495.9px;">00016</span>
<span class="t" style="top:401.15px;font-size:10.81px;color:#42423a;left:545.19px;">1</span>
<span class="t" style="top:401.15px;font-size:10.81px;color:#42423a;left:942.53px;letter-spacing:0.0000em;">CORNELLA DE LLOBREGAT</span>
<span class="t" style="top:401.15px;font-size:10.81px;color:#42423a;left:1190.95px;letter-spacing:0.0130em;">BARCELONA</span>
<span class="t" style="top:401.15px;font-size:10.81px;color:#42423a;left:1319.32px;">354.54.76</span>
<div style="left:38.87px;top:412.89px;width:1336.85px;height:17.43px;background:#ffffff"></div>
<span class="t" style="top:419.15px;font-size:10.81px;color:#42423a;right:1296.98px;">17</span>
<span class="t" style="top:419.15px;font-size:10.81px;color:#42423a;left:85.54px;">Fernández López, Lluís</span>
<span class="t" style="top:419.15px;font-size:10.81px;color:#42423a;right:885.68px;">72</span>
<span class="t" style="top:419.15px;font-size:10.81px;color:#42423a;left:495.9px;">00017</span>
<span class="t" style="top:419.15px;font-size:10.81px;color:#42423a;left:545.19px;">1</span>
<span class="t" style="top:419.15px;font-size:10.81px;color:#42423a;left:942.53px;letter-spacing:0.0000em;">BARCELONA</span>
<span class="t" style="top:419.15px;font-size:10.81px;color:#42423a;left:1190.95px;letter-spacing:0.0130em;">BARCELONA</span>
<span class="t" style="top:419.15px;font-size:10.81px;color:#42423a;left:1319.32px;">354.45.72</span>
<div style="left:38.87px;top:429.92px;width:1336.85px;height:17.43px;background:#ffff80"></div>
<span class="t" style="top:436.15px;font-size:10.81px;color:#42423a;right:1296.98px;">18</span>
<span class="t" style="top:436.15px;font-size:10.81px;color:#42423a;left:85.54px;">Font Vila, Xavier</span>
<span class="t" style="top:436.15px;font-size:10.81px;color:#42423a;right:885.68px;">4</span>
<span class="t" style="top:436.15px;font-size:10.81px;color:#42423a;left:495.9px;">00018</span>
<span class="t" style="top:436.15px;font-size:10.81px;color:#42423a;left:545.19px;">1</span>
<span class="t" style="top:436.15px;font-size:10.81px;color:#42423a;left:942.53px;letter-spacing:0.0000em;">SANT BOI DE LLOBREGAT</span>
<span class="t" style="top:436.15px;font-size:10.81px;color:#42423a;left:1190.95px;letter-spacing:0.0130em;">BARCELONA</span>
<span class="t" style="top:436.15px;font-size:10.81px;color:#42423a;left:1319.32px;">376.33.08</span>
<div style="left:38.87px;top:446.95px;width:1336.85px;height:17.43px;background:#ffff80"></div>
<span class="t" style="top:452.15px;font-size:10.81px;color:#42423a;right:1296.98px;">19</span>
<span class="t" style="top:452.15px;font-size:10.81px;color:#42423a;left:85.54px;">Ramírez Borrajo, Maria</span>
<span class="t" style="top:452.15px;font-size:10.81px;color:#42423a;right:885.68px;">2</span>
<span class="t" style="top:452.15px;font-size:10.81px;color:#42423a;left:495.9px;">00019</span>
<span class="t" style="top:452.15px;font-size:10.81px;color:#42423a;left:545.19px;">1</span>
<span class="t" style="top:452.15px;font-size:10.81px;color:#42423a;left:942.53px;letter-spacing:0.0000em;">CORNELLA DE LLOBREGAT</span>
<span class="t" style="top:452.15px;font-size:10.81px;color:#42423a;left:1190.95px;letter-spacing:0.0130em;">BARCELONA</span>
<span class="t" style="top:452.15px;font-size:10.81px;color:#42423a;left:1319.32px;">376.33.08</span>
<div style="left:38.87px;top:463.97px;width:1336.85px;height:17.43px;background:#ffff80"></div>
<span class="t" style="top:470.15px;font-size:10.81px;color:#42423a;right:1296.98px;">20</span>
<span class="t" style="top:470.15px;font-size:10.81px;color:#42423a;left:85.54px;">Ramírez María, Alejandro</span>
<span class="t" style="top:470.15px;font-size:10.81px;color:#42423a;right:885.68px;">3</span>
<span class="t" style="top:470.15px;font-size:10.81px;color:#42423a;left:495.9px;">00020</span>
<span class="t" style="top:470.15px;font-size:10.81px;color:#42423a;left:545.19px;">1</span>
<span class="t" style="top:470.15px;font-size:10.81px;color:#42423a;left:942.53px;letter-spacing:0.0000em;">AITONA</span>
<span class="t" style="top:470.15px;font-size:10.81px;color:#42423a;left:1190.95px;letter-spacing:0.0130em;">LLEIDA</span>
<span class="t" style="top:470.15px;font-size:10.81px;color:#42423a;left:1319.32px;">534.65.85</span>
<div style="left:38.87px;top:481px;width:1336.85px;height:17.43px;background:#ffff80"></div>
<span class="t" style="top:487.15px;font-size:10.81px;color:#42423a;right:1296.98px;">21</span>
<span class="t" style="top:487.15px;font-size:10.81px;color:#42423a;left:85.54px;">Guerra Pérez, Isabel</span>
<span class="t" style="top:487.15px;font-size:10.81px;color:#42423a;left:495.9px;">00021</span>
<span class="t" style="top:487.15px;font-size:10.81px;color:#42423a;left:545.19px;">1</span>
<span class="t" style="top:487.15px;font-size:10.81px;color:#42423a;left:942.53px;letter-spacing:0.0000em;">BARCELONA</span>
<span class="t" style="top:487.15px;font-size:10.81px;color:#42423a;left:1190.95px;letter-spacing:0.0130em;">BARCELONA</span>
<span class="t" style="top:487.15px;font-size:10.81px;color:#42423a;left:1319.32px;">354.62.81</span>
<div style="left:38.87px;top:498.03px;width:1336.85px;height:17.43px;background:#ffffff"></div>
<span class="t" style="top:505.15px;font-size:10.81px;color:#42423a;right:1296.98px;">22</span>
<span class="t" style="top:505.15px;font-size:10.81px;color:#42423a;left:85.54px;">Guerra Pérez, Manuel</span>
<span class="t" style="top:505.15px;font-size:10.81px;color:#42423a;right:885.68px;">6</span>
<span class="t" style="top:505.15px;font-size:10.81px;color:#42423a;left:495.9px;">00022</span>
<span class="t" style="top:505.15px;font-size:10.81px;color:#42423a;left:545.19px;">1</span>
<span class="t" style="top:505.15px;font-size:10.81px;color:#42423a;left:942.53px;letter-spacing:0.0000em;">BARCELONA</span>
<span class="t" style="top:505.15px;font-size:10.81px;color:#42423a;left:1190.95px;letter-spacing:0.0130em;">BARCELONA</span>
<span class="t" style="top:505.15px;font-size:10.81px;color:#42423a;left:1319.32px;">354.62.81</span>
<div style="left:38.87px;top:515.05px;width:1336.85px;height:17.43px;background:#ffff80"></div>
<span class="t" style="top:521.15px;font-size:10.81px;color:#42423a;right:1296.98px;">23</span>
<span class="t" style="top:521.15px;font-size:10.81px;color:#42423a;left:85.54px;">García Moreno, Elena</span>
<span class="t" style="top:521.15px;font-size:10.81px;color:#42423a;right:885.68px;">40</span>
<span class="t" style="top:521.15px;font-size:10.81px;color:#42423a;left:495.9px;">00023</span>
<span class="t" style="top:521.15px;font-size:10.81px;color:#42423a;left:545.19px;">1</span>
<span class="t" style="top:521.15px;font-size:10.81px;color:#42423a;left:942.53px;letter-spacing:0.0000em;">SANT BOI DE LLOBREGAT</span>
<span class="t" style="top:521.15px;font-size:10.81px;color:#42423a;left:1190.95px;letter-spacing:0.0130em;">BARCELONA</span>
<div style="left:38.87px;top:532.08px;width:1336.85px;height:17.43px;background:#ffff80"></div>
<span class="t" style="top:538.15px;font-size:10.81px;color:#42423a;right:1296.98px;">24</span>
<span class="t" style="top:538.15px;font-size:10.81px;color:#42423a;left:85.54px;">Margallo Saiz, José Luís</span>
<span class="t" style="top:538.15px;font-size:10.81px;color:#42423a;right:885.68px;">39</span>
<span class="t" style="top:538.15px;font-size:10.81px;color:#42423a;left:495.9px;">00024</span>
<span class="t" style="top:538.15px;font-size:10.81px;color:#42423a;left:545.19px;">1</span>
<span class="t" style="top:538.15px;font-size:10.81px;color:#42423a;left:565.6px;">Luís Companys, 54</span>
<span class="t" style="top:538.15px;font-size:10.81px;color:#42423a;left:942.53px;letter-spacing:0.0000em;">CORNELLA DE LLOBREGAT</span>
<span class="t" style="top:538.15px;font-size:10.81px;color:#42423a;left:1190.95px;letter-spacing:0.0130em;">BARCELONA</span>
<div style="left:38.87px;top:549.11px;width:1336.85px;height:17.43px;background:#eaa24a"></div>
<span class="t" style="top:556.15px;font-size:10.81px;color:#42423a;right:1296.98px;">25</span>
<span class="t" style="top:556.15px;font-size:10.81px;color:#42423a;left:85.54px;">Querol Famades, Ignacio</span>
<span class="t" style="top:556.15px;font-size:10.81px;color:#42423a;left:495.9px;">00025</span>
<span class="t" style="top:556.15px;font-size:10.81px;color:#42423a;left:545.19px;">1</span>
<span class="t" style="top:556.15px;font-size:10.81px;color:#42423a;left:565.6px;">Juan XXIII, 43</span>
<span class="t" style="top:556.15px;font-size:10.81px;color:#42423a;left:942.53px;letter-spacing:0.0000em;">SANT BOI DE LLOBREGAT</span>
<span class="t" style="top:556.15px;font-size:10.81px;color:#42423a;left:1190.95px;letter-spacing:0.0130em;">BARCELONA</span>
<span class="t" style="top:556.15px;font-size:10.81px;color:#42423a;left:1319.32px;">935344454</span>
<div style="left:38.87px;top:566.13px;width:1336.85px;height:17.43px;background:#ffff80"></div>
<span class="t" style="top:572.15px;font-size:10.81px;color:#42423a;right:1296.98px;">26</span>
<span class="t" style="top:572.15px;font-size:10.81px;color:#42423a;left:85.54px;">Domingo Hospital, Herminia</span>
<span class="t" style="top:572.15px;font-size:10.81px;color:#42423a;right:885.68px;">43</span>
<span class="t" style="top:572.15px;font-size:10.81px;color:#42423a;left:495.9px;">00026</span>
<span class="t" style="top:572.15px;font-size:10.81px;color:#42423a;left:545.19px;">1</span>
<span class="t" style="top:572.15px;font-size:10.81px;color:#42423a;left:565.6px;">Balmes, 65</span>
<span class="t" style="top:572.15px;font-size:10.81px;color:#42423a;left:942.53px;letter-spacing:0.0000em;">BARCELONA</span>
<span class="t" style="top:572.15px;font-size:10.81px;color:#42423a;left:1190.95px;letter-spacing:0.0130em;">BARCELONA</span>
<span class="t" style="top:572.15px;font-size:10.81px;color:#42423a;left:1319.32px;">933654598</span>
<div style="left:38.87px;top:583.16px;width:1336.85px;height:17.43px;background:#fff"></div>
<span class="t" style="top:589.15px;font-size:10.81px;color:#42423a;left:85.54px;"></span>
<span class="t" style="top:589.15px;font-size:10.81px;color:#42423a;left:495.9px;"></span>
<span class="t" style="top:589.15px;font-size:10.81px;color:#42423a;left:545.19px;"></span>
<span class="t" style="top:589.15px;font-size:10.81px;color:#42423a;left:942.53px;"></span>
<span class="t" style="top:589.15px;font-size:10.81px;color:#42423a;left:1190.95px;"></span>
<div style="left:80.91px;top:120.18px;width:1.21px;height:18.93px;background:#a4acb9"></div>
<div style="left:82.11px;top:120.18px;width:1.07px;height:18.93px;background:#f4f8fe"></div>
<div style="left:81.11px;top:140.46px;width:1.07px;height:443px;background:rgba(150,150,150,.62)"></div>
<div style="left:82.18px;top:140.46px;width:1.28px;height:443px;background:rgba(255,255,255,.62)"></div>
<div style="left:442.33px;top:120.18px;width:1.21px;height:18.93px;background:#a4acb9"></div>
<div style="left:443.53px;top:120.18px;width:1.07px;height:18.93px;background:#f4f8fe"></div>
<div style="left:442.53px;top:140.46px;width:1.07px;height:443px;background:rgba(150,150,150,.62)"></div>
<div style="left:443.6px;top:140.46px;width:1.28px;height:443px;background:rgba(255,255,255,.62)"></div>
<div style="left:491.81px;top:120.18px;width:1.21px;height:18.93px;background:#a4acb9"></div>
<div style="left:493.02px;top:120.18px;width:1.07px;height:18.93px;background:#f4f8fe"></div>
<div style="left:492.01px;top:140.46px;width:1.07px;height:443px;background:rgba(150,150,150,.62)"></div>
<div style="left:493.08px;top:140.46px;width:1.28px;height:443px;background:rgba(255,255,255,.62)"></div>
<div style="left:539.95px;top:120.18px;width:1.21px;height:18.93px;background:#a4acb9"></div>
<div style="left:541.16px;top:120.18px;width:1.07px;height:18.93px;background:#f4f8fe"></div>
<div style="left:540.15px;top:140.46px;width:1.07px;height:443px;background:rgba(150,150,150,.62)"></div>
<div style="left:541.22px;top:140.46px;width:1.28px;height:443px;background:rgba(255,255,255,.62)"></div>
<div style="left:561.17px;top:120.18px;width:1.21px;height:18.93px;background:#a4acb9"></div>
<div style="left:562.37px;top:120.18px;width:1.07px;height:18.93px;background:#f4f8fe"></div>
<div style="left:561.37px;top:140.46px;width:1.07px;height:443px;background:rgba(150,150,150,.62)"></div>
<div style="left:562.44px;top:140.46px;width:1.28px;height:443px;background:rgba(255,255,255,.62)"></div>
<div style="left:937.42px;top:120.18px;width:1.21px;height:18.93px;background:#a4acb9"></div>
<div style="left:938.63px;top:120.18px;width:1.07px;height:18.93px;background:#f4f8fe"></div>
<div style="left:937.63px;top:140.46px;width:1.07px;height:443px;background:rgba(150,150,150,.62)"></div>
<div style="left:938.7px;top:140.46px;width:1.28px;height:443px;background:rgba(255,255,255,.62)"></div>
<div style="left:1185.85px;top:120.18px;width:1.21px;height:18.93px;background:#a4acb9"></div>
<div style="left:1187.06px;top:120.18px;width:1.07px;height:18.93px;background:#f4f8fe"></div>
<div style="left:1186.05px;top:140.46px;width:1.07px;height:443px;background:rgba(150,150,150,.62)"></div>
<div style="left:1187.12px;top:140.46px;width:1.28px;height:443px;background:rgba(255,255,255,.62)"></div>
<div style="left:1313.95px;top:120.18px;width:1.21px;height:18.93px;background:#a4acb9"></div>
<div style="left:1315.16px;top:120.18px;width:1.07px;height:18.93px;background:#f4f8fe"></div>
<div style="left:1314.15px;top:140.46px;width:1.07px;height:443px;background:rgba(150,150,150,.62)"></div>
<div style="left:1315.23px;top:140.46px;width:1.28px;height:443px;background:rgba(255,255,255,.62)"></div>
<div style="left:83.12px;top:140.06px;width:1292.6px;height:1.07px;background:rgba(240,240,240,.8)"></div>
<div style="left:38.74px;top:119.11px;width:0.94px;height:19.47px;background:#f0f5fe"></div>
<div style="left:484.36px;top:208.41px;width:467.84px;height:327.92px;background:rgba(90,90,90,.28);border-radius:1px"></div>
<div style="left:485.97px;top:209.48px;width:464.08px;height:324.43px;background:#e0ebfb"></div>
<div style="left:485.97px;top:209.48px;width:464.08px;height:25.51px;background:#fff"></div>
<svg style="left:488.65px;top:213.78px" width="16.65" height="16.65" viewBox="0 0 16 16"><rect x=".4" y="1.1" width="14.2" height="14.2" rx="1.3" fill="#6d4fa6" stroke="#2a2233" stroke-width="1"/><path d="M1 1.8h9v6L1 10.5z" fill="#a48fd4" opacity=".9"/><ellipse cx="4.9" cy="7.6" rx="2.7" ry="3.3" fill="#2e2018"/><ellipse cx="4.9" cy="8.6" rx="1.9" ry="2.7" fill="#e58a22"/><ellipse cx="4.5" cy="8" rx=".9" ry="1.4" fill="#f6b048" opacity=".8"/><path d="M.9 15V13Q1.8 11 4.9 11.2Q8 11 8.3 13.2V15z" fill="#1b96f0"/><path d="M3.8 11.3L4.9 13.6L6 11.3z" fill="#e6f3ff"/><ellipse cx="10.7" cy="8.8" rx="2.4" ry="3" fill="#3a2818"/><ellipse cx="10.7" cy="9.6" rx="1.8" ry="2.4" fill="#eaa02c"/><ellipse cx="10.3" cy="9" rx=".8" ry="1.2" fill="#f8c458" opacity=".8"/><path d="M7.6 15V14.2Q8.6 12.4 10.7 12.5Q13.4 12.4 14 14.4V15z" fill="#e8463a"/><rect x="9.2" y="0" width="6.8" height="7" rx=".7" fill="#1b1b20"/><path d="M10.7 1.4v1.7M13.2 1.4v1.7M13.2 4.2v1.7" stroke="#f2f2f2" stroke-width="1.2"/></svg>
<span class="s" style="top:216.07px;font-size:11.95px;color:#3a3a3a;left:509.47px;letter-spacing:-0.0194em;">Seleccionar Columnas</span>
<svg style="left:928.16px;top:217.81px" width="10.21" height="9.8" viewBox="0 0 16 16"><path d="M1 1L15 15M15 1L1 15" stroke="#333" stroke-width="1.7" fill="none"/></svg>
<span class="t" style="top:244.15px;font-size:10.81px;color:#30333a;left:489.79px;letter-spacing:-0.0261em;">Columnas a Seleccionar</span>
<span class="t" style="top:244.15px;font-size:10.81px;color:#30333a;left:744.93px;letter-spacing:-0.0227em;">Columnas Seleccionadas</span>
<div style="left:488.79px;top:254.46px;width:202.77px;height:250.97px;background:#fff;border:1.3px solid #9aa0aa;border-right-color:#d8dce2;border-bottom-color:#d8dce2"></div>
<div style="left:674.23px;top:256.34px;width:15.98px;height:247.48px;background:#f0f0f0"></div>
<svg style="left:678.53px;top:262.25px" width="7.79" height="4.83" viewBox="0 0 16 9"><path d="M1 8L8 1L15 8" stroke="#444" stroke-width="3.2" fill="none"/></svg>
<svg style="left:678.53px;top:492.82px" width="7.79" height="4.83" viewBox="0 0 16 9"><path d="M1 1L8 8L15 1" stroke="#444" stroke-width="3.2" fill="none"/></svg>
<div style="left:744.46px;top:254.46px;width:202.5px;height:250.97px;background:#fff;border:1.3px solid #9aa0aa;border-right-color:#d8dce2;border-bottom-color:#d8dce2"></div>
<div style="left:929.64px;top:256.34px;width:15.98px;height:247.48px;background:#f0f0f0"></div>
<svg style="left:933.93px;top:262.25px" width="7.79" height="4.83" viewBox="0 0 16 9"><path d="M1 8L8 1L15 8" stroke="#444" stroke-width="3.2" fill="none"/></svg>
<svg style="left:933.93px;top:492.82px" width="7.79" height="4.83" viewBox="0 0 16 9"><path d="M1 1L8 8L15 1" stroke="#444" stroke-width="3.2" fill="none"/></svg>
<div style="left:674.23px;top:273.67px;width:14.77px;height:58.68px;background:#cdcdcd"></div>
<div style="left:929.77px;top:273.67px;width:14.77px;height:174.84px;background:#cdcdcd"></div>
<div style="left:746.07px;top:256.48px;width:182.09px;height:13.03px;background:#0078d7"></div>
<span class="t" style="top:259.15px;font-size:10.81px;color:#222;left:492.68px;">[006] Tipo</span>
<span class="t" style="top:272.15px;font-size:10.81px;color:#222;left:492.68px;">[007] F.Natal</span>
<span class="t" style="top:286.15px;font-size:10.81px;color:#222;left:492.68px;">[008] Lugar</span>
<span class="t" style="top:298.15px;font-size:10.81px;color:#222;left:492.68px;">[011] CP</span>
<span class="t" style="top:311.15px;font-size:10.81px;color:#222;left:492.68px;">[013] Barrio</span>
<span class="t" style="top:325.15px;font-size:10.81px;color:#222;left:492.68px;">[014] E-Mail</span>
<span class="t" style="top:337.15px;font-size:10.81px;color:#222;left:492.68px;">[015] Web</span>
<span class="t" style="top:350.15px;font-size:10.81px;color:#222;left:492.68px;">[017] Tf.2</span>
<span class="t" style="top:364.15px;font-size:10.81px;color:#222;left:492.68px;">[018] Móvil</span>
<span class="t" style="top:377.15px;font-size:10.81px;color:#222;left:492.68px;">[019] Fax</span>
<span class="t" style="top:389.15px;font-size:10.81px;color:#222;left:492.68px;">[020] No Correo</span>
<span class="t" style="top:403.15px;font-size:10.81px;color:#222;left:492.68px;">[021] No SMS</span>
<span class="t" style="top:416.15px;font-size:10.81px;color:#222;left:492.68px;">[022] No E-Mail</span>
<span class="t" style="top:428.15px;font-size:10.81px;color:#222;left:492.68px;">[023] No Cesión</span>
<span class="t" style="top:442.15px;font-size:10.81px;color:#222;left:492.68px;">[024] NIF</span>
<span class="t" style="top:455.15px;font-size:10.81px;color:#222;left:492.68px;">[025] Nº SS</span>
<span class="t" style="top:467.15px;font-size:10.81px;color:#222;left:492.68px;">[026] Licencia</span>
<span class="t" style="top:481.15px;font-size:10.81px;color:#222;left:492.68px;">[027] Licencia 2</span>
<span class="t" style="top:494.15px;font-size:10.81px;color:#222;left:492.68px;">[031] Profesión</span>
<span class="t" style="top:259.15px;font-size:10.81px;color:#fff;left:748.49px;">[001] Código</span>
<span class="t" style="top:272.15px;font-size:10.81px;color:#222;left:748.49px;">[002] Nombre</span>
<span class="t" style="top:286.15px;font-size:10.81px;color:#222;left:748.49px;">[003] Nº Socio</span>
<span class="t" style="top:298.15px;font-size:10.81px;color:#222;left:748.49px;">[004] Clave</span>
<span class="t" style="top:311.15px;font-size:10.81px;color:#222;left:748.49px;">[005] Nº</span>
<span class="t" style="top:325.15px;font-size:10.81px;color:#222;left:748.49px;">[009] Dirección</span>
<span class="t" style="top:337.15px;font-size:10.81px;color:#222;left:748.49px;">[010] Población</span>
<span class="t" style="top:350.15px;font-size:10.81px;color:#222;left:748.49px;">[012] Provincia</span>
<span class="t" style="top:364.15px;font-size:10.81px;color:#222;left:748.49px;">[016] Tf.1</span>
<span class="t" style="top:377.15px;font-size:10.81px;color:#222;left:748.49px;">[028] Clase</span>
<span class="t" style="top:389.15px;font-size:10.81px;color:#222;left:748.49px;">[029] Sección</span>
<span class="t" style="top:403.15px;font-size:10.81px;color:#222;left:748.49px;">[030] Entidad</span>
<span class="t" style="top:416.15px;font-size:10.81px;color:#222;left:748.49px;">[040] Centro</span>
<span class="t" style="top:428.15px;font-size:10.81px;color:#222;left:748.49px;">[042] U.Ins.</span>
<span class="t" style="top:442.15px;font-size:10.81px;color:#222;left:748.49px;">[043] F.Baja</span>
<span class="t" style="top:455.15px;font-size:10.81px;color:#222;left:748.49px;">[046] Estado</span>
<span class="t" style="top:467.15px;font-size:10.81px;color:#222;left:748.49px;">[051] Banco</span>
<span class="t" style="top:481.15px;font-size:10.81px;color:#222;left:748.49px;">[055] BIC</span>
<span class="t" style="top:494.15px;font-size:10.81px;color:#222;left:748.49px;">[056] IBAN</span>
<div class="btn" style="left:702.16px;top:332.89px;width:31.69px;height:17.05px;"></div>
<svg style="left:0;top:0" width="1375" height="583" viewBox="0 0 1024 434.15"><path d="M533.0 251.35L536.5 254.25L533.0 257.15Z" fill="#111"/></svg>
<div class="btn" style="left:702.16px;top:358.67px;width:31.69px;height:17.32px;"></div>
<svg style="left:0;top:0" width="1375" height="583" viewBox="0 0 1024 434.15"><path d="M531.4000000000001 270.85L534.5 273.55L531.4000000000001 276.25ZM534.7 270.85L537.9000000000001 273.55L534.7 276.25Z" fill="#111"/></svg>
<div class="btn" style="left:702.16px;top:384.58px;width:31.69px;height:17.19px;"></div>
<svg style="left:0;top:0" width="1375" height="583" viewBox="0 0 1024 434.15"><path d="M536.4000000000001 289.9L532.9000000000001 292.79999999999995L536.4000000000001 295.69999999999993Z" fill="#111"/></svg>
<div class="btn" style="left:702.16px;top:410.5px;width:31.69px;height:17.19px;"></div>
<svg style="left:0;top:0" width="1375" height="583" viewBox="0 0 1024 434.15"><path d="M538.0 309.40000000000003L534.9000000000001 312.1L538.0 314.8ZM534.7 309.40000000000003L531.5 312.1L534.7 314.8Z" fill="#111"/></svg>
<div class="btn" style="left:490.13px;top:510.27px;width:109.44px;height:19.34px;"></div>
<svg style="left:492.28px;top:512.02px" width="15.58" height="15.58" viewBox="0 0 16 16"><rect x="4.4" y=".6" width="10.8" height="14" fill="#fff" stroke="#4f7fc6" stroke-width=".9"/><rect x="4.4" y=".6" width="10.8" height="2.4" fill="#dfe9f9"/><path d="M8 1.8h4" stroke="#7f98c6" stroke-width=".9"/><path d="M14 3v11" stroke="#6b93d6" stroke-width="1.4"/><path d="M6 5.2L7.4 6.4L9.2 5.8L9.4 7.6L11.2 8.4L10.2 10L11.2 11.8L9.4 12.4L9 14.2L7.2 13.8L6 15.2L4.6 13.8L2.8 14.2L2.6 12.4L.8 11.6L1.8 10L.8 8.4L2.6 7.8L2.8 5.8L4.6 6.4z" fill="#d99f1a" stroke="#a87812" stroke-width=".4"/><circle cx="6" cy="10.2" r="3" fill="#ecc040"/><path d="M6 7.6V12.8M3.6 8.8L8.4 11.6M8.4 8.8L3.6 11.6" stroke="#c28a14" stroke-width=".9"/></svg>
<span class="t" style="top:516.15px;font-size:10.81px;color:#222;left:514.97px;">Predeterminado</span>
<div class="btn" style="left:784.75px;top:510.27px;width:78.35px;height:19.34px;"></div>
<svg style="left:786.89px;top:512.02px" width="15.58" height="15.58" viewBox="0 0 16 16"><path d="M1.6 8.2L5.8 12.8L14.6 2.6" fill="none" stroke="#2b8f1c" stroke-width="4.2" stroke-linejoin="miter"/><path d="M1.6 8.2L5.8 12.8L14.6 2.6" fill="none" stroke="#44c42e" stroke-width="2.8"/><path d="M2.4 7.6L5.8 11.2L13.6 2.2" fill="none" stroke="#8fe47c" stroke-width=".9" opacity=".8"/></svg>
<span class="t" style="top:516.15px;font-size:10.81px;color:#222;left:813.62px;">Aceptar</span>
<div class="btn" style="left:867.46px;top:510.27px;width:78.69px;height:19.34px;"></div>
<svg style="left:869.61px;top:512.02px" width="15.58" height="15.58" viewBox="0 0 16 16"><path d="M2.2 2.2L13.8 13.8M13.8 2.2L2.2 13.8" stroke="#b91a1a" stroke-width="4.4" stroke-linecap="round"/><path d="M2.2 2.2L13.8 13.8M13.8 2.2L2.2 13.8" stroke="#e93030" stroke-width="3" stroke-linecap="round"/><path d="M2.6 2L8 7.2L13.2 2" fill="none" stroke="#f88" stroke-width=".9" opacity=".8"/></svg>
<span class="t" style="top:516.15px;font-size:10.81px;color:#222;left:894.66px;">Cancelar</span>
<svg style="left:0;top:0" width="1375" height="583" viewBox="0 0 1024 434.15"><rect x="306.8" y="58.7" width="21.8" height="27" rx="3.6" fill="none" stroke="#e81a26" stroke-width="1.35"/><path d="M328.2 85.6L407 151" stroke="#f00" stroke-width="2.2" fill="none"/><path d="M416 160.3L402.2 155.7L409.3 147.1Z" fill="#f00"/></svg>
</div></body></html>
